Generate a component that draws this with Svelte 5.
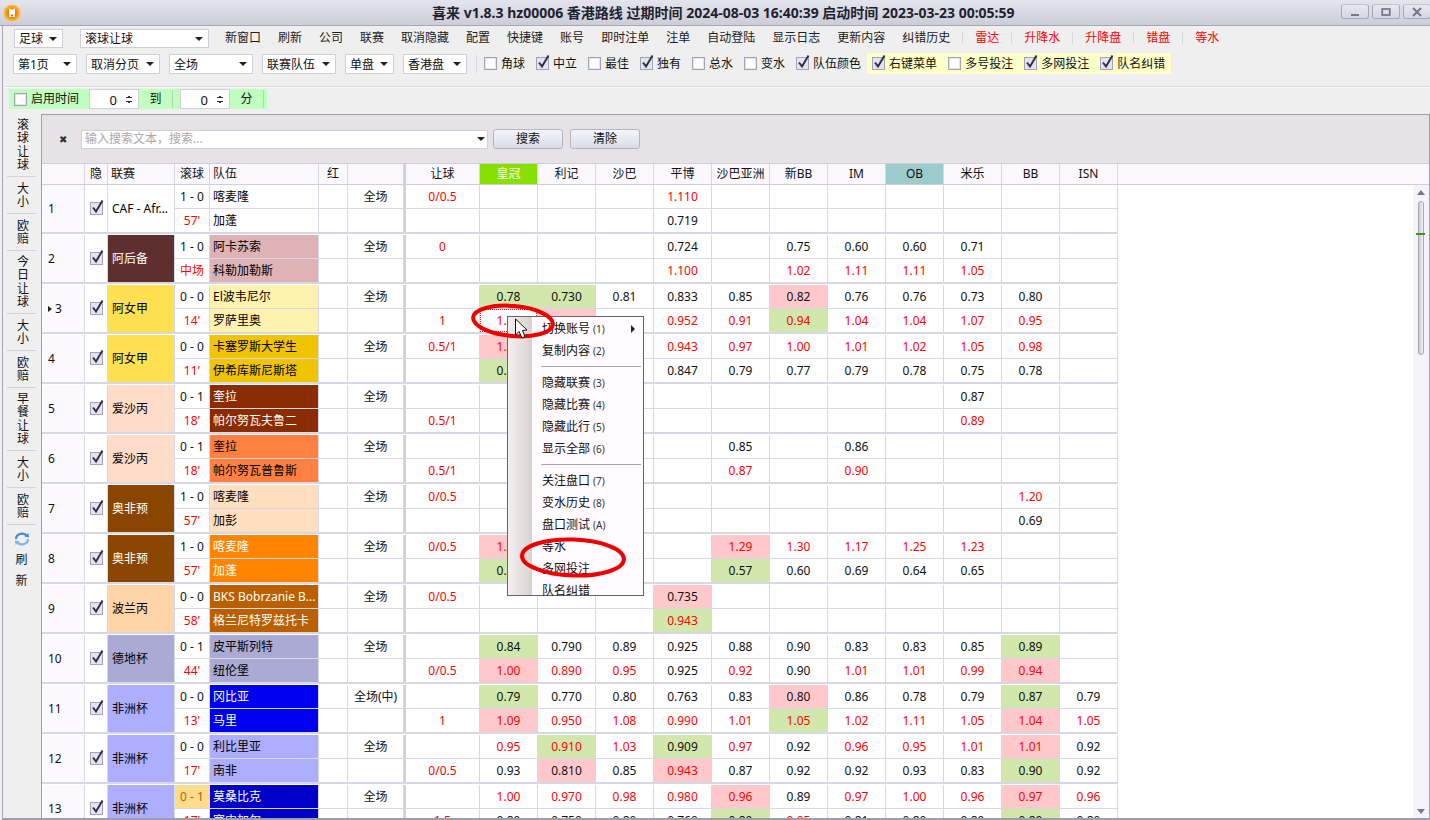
<script lang="ts">
	const links = ['新窗口', '刷新', '公司', '联赛', '取消隐藏', '配置', '快捷键', '账号', '即时注单', '注单', '自动登陆', '显示日志', '更新内容', '纠错历史'];
	const redLinks = ['雷达', '升降水', '升降盘', '错盘', '等水'];
	const selects = [
		{ text: '第1页', w: 64 },
		{ text: '取消分页', w: 74 },
		{ text: '全场', w: 84 },
		{ text: '联赛队伍', w: 74 },
		{ text: '单盘', w: 49 },
		{ text: '香港盘', w: 64 }
	];
	const checks = [
		{ text: '角球', on: false },
		{ text: '中立', on: true },
		{ text: '最佳', on: false },
		{ text: '独有', on: true },
		{ text: '总水', on: false },
		{ text: '变水', on: false },
		{ text: '队伍颜色', on: true }
	];
	const yellowChecks = [
		{ text: '右键菜单', on: true },
		{ text: '多号投注', on: false },
		{ text: '多网投注', on: true },
		{ text: '队名纠错', on: true }
	];
	const side = [
		{ text: '滚球让球', tall: true },
		{ text: '大小' },
		{ text: '欧赔' },
		{ text: '今日让球', tall: true },
		{ text: '大小' },
		{ text: '欧赔' },
		{ text: '早餐让球', tall: true },
		{ text: '大小' },
		{ text: '欧赔' }
	];
	const books = ['皇冠', '利记', '沙巴', '平博', '沙巴亚洲', '新BB', 'IM', 'OB', '米乐', 'BB', 'ISN'];
	const menu = [
		[{ t: '切换账号', k: '(1)', sub: true }, { t: '复制内容', k: '(2)' }],
		[{ t: '隐藏联赛', k: '(3)' }, { t: '隐藏比赛', k: '(4)' }, { t: '隐藏此行', k: '(5)' }, { t: '显示全部', k: '(6)' }],
		[{ t: '关注盘口', k: '(7)' }, { t: '变水历史', k: '(8)' }, { t: '盘口测试', k: '(A)' }, { t: '等水' }, { t: '多网投注' }, { t: '队名纠错' }]
	];

	// odds: * = red text, trailing g / p = green / pink cell
	const matches = [
		{ league: 'CAF - Afr...', lc: '#fff', lt: '#000', s: '1 - 0', m: "57'", a: '喀麦隆', b: '加蓬', tc: '#fff', tt: '#000', hc: '0/0.5', top: ',,,*1.110,,,,,,,', bot: ',,,0.719,,,,,,,' },
		{ league: '阿后备', lc: '#5f2f2f', lt: '#fff', s: '1 - 0', m: '中场', a: '阿卡苏索', b: '科勒加勒斯', tc: '#dfb3b6', tt: '#000', hc: '0', top: ',,,0.724,,0.75,0.60,0.60,0.71,,', bot: ',,,*1.100,,*1.02,*1.11,*1.11,*1.05,,' },
		{ league: '阿女甲', lc: '#ffe050', lt: '#000', s: '0 - 0', m: "14'", a: 'El波韦尼尔', b: '罗萨里奥', tc: '#fff2ae', tt: '#000', hl: '1', cur: true, top: '0.78g,0.730g,0.81,0.833,0.85,0.82p,0.76,0.76,0.73,0.80,', bot: '*1.05,p,,*0.952,*0.91,*0.94g,*1.04,*1.04,*1.07,*0.95,' },
		{ league: '阿女甲', lc: '#ffe050', lt: '#000', s: '0 - 0', m: "11'", a: '卡塞罗斯大学生', b: '伊希库斯尼斯塔', tc: '#f0c400', tt: '#000', hc: '0.5/1', top: '*1.05p,,,*0.943,*0.97,*1.00,*1.01,*1.02,*1.05,*0.98,', bot: '0.80g,,,0.847,0.79,0.77,0.79,0.78,0.75,0.78,' },
		{ league: '爱沙丙', lc: '#ffdcc8', lt: '#000', s: '0 - 1', m: "18'", a: '奎拉', b: '帕尔努瓦夫鲁二', tc: '#8a2c00', tt: '#fff', hl: '0.5/1', top: ',,,,,,,,0.87,,', bot: ',,,,,,,,*0.89,,' },
		{ league: '爱沙丙', lc: '#ffdcc8', lt: '#000', s: '0 - 1', m: "18'", a: '奎拉', b: '帕尔努瓦普鲁斯', tc: '#ff8040', tt: '#000', hl: '0.5/1', top: ',,,,0.85,,0.86,,,,', bot: ',,,,*0.87,,*0.90,,,,' },
		{ league: '奥非预', lc: '#8a4500', lt: '#fff', s: '1 - 0', m: "57'", a: '喀麦隆', b: '加彭', tc: '#ffdfbf', tt: '#000', hc: '0/0.5', top: ',,,,,,,,,*1.20,', bot: ',,,,,,,,,0.69,' },
		{ league: '奥非预', lc: '#8a4500', lt: '#fff', s: '1 - 0', m: "57'", a: '喀麦隆', b: '加蓬', tc: '#ff8400', tt: '#fff', hc: '0/0.5', top: '*1.05p,,,,*1.29p,*1.30,*1.17,*1.25,*1.23,,', bot: '0.80g,,,,0.57g,0.60,0.69,0.64,0.65,,' },
		{ league: '波兰丙', lc: '#ffd4a8', lt: '#000', s: '0 - 0', m: "58'", a: 'BKS Bobrzanie B...', b: '格兰尼特罗兹托卡', tc: '#bb6000', tt: '#fff', hc: '0/0.5', top: ',,,0.735p,,,,,,,', bot: ',,,*0.943g,,,,,,,' },
		{ league: '德地杯', lc: '#aaaad4', lt: '#000', s: '0 - 1', m: "44'", a: '皮平斯列特', b: '纽伦堡', tc: '#aaaad4', tt: '#000', hl: '0/0.5', top: '0.84g,0.790,0.89,0.925,0.88,0.90,0.83,0.83,0.85,0.89g,', bot: '*1.00p,*0.890,*0.95,0.925,*0.92,0.90,*1.01,*1.01,*0.99,*0.94p,' },
		{ league: '非洲杯', lc: '#aeaeff', lt: '#000', s: '0 - 0', m: "13'", a: '冈比亚', b: '马里', tc: '#0000f0', tt: '#fff', scope: '全场(中)', hl: '1', top: '0.79g,0.770,0.80,0.763,0.83,0.80p,0.86,0.78,0.79,0.87g,0.79', bot: '*1.09p,*0.950,*1.08,*0.990,*1.01,*1.05g,*1.02,*1.11,*1.05,*1.04p,*1.05' },
		{ league: '非洲杯', lc: '#aeaeff', lt: '#000', s: '0 - 0', m: "17'", a: '利比里亚', b: '南非', tc: '#aeaeff', tt: '#000', hl: '0/0.5', top: '*0.95,*0.910g,*1.03,0.909g,*0.97,0.92,*0.96,*0.95,*1.01,*1.01p,0.92', bot: '0.93,0.810p,0.85,*0.943p,0.87,0.92,0.92,0.93,0.83,0.90g,0.92' },
		{ league: '非洲杯', lc: '#aeaeff', lt: '#000', s: '0 - 1', warn: true, m: "17'", a: '莫桑比克', b: '塞内加尔', tc: '#0000c8', tt: '#fff', hl: '1.5', top: '*1.00,*0.970,*0.98,*0.980,*0.96p,0.89,*0.97,*1.00,*0.96,*0.97p,*0.96', bot: '0.80,0.750,0.80,0.760,0.80g,*0.95,0.81,0.80,0.80,0.80g,0.80' }
	];

	function parseOdds(line: string) {
		return line.split(',').map((v) => {
			const hit = v.match(/^(\*)?([\d.]*)([gp])?$/);
			return { red: !!hit?.[1], val: hit?.[2] ?? '', bg: hit?.[3] ?? '' };
		});
	}
</script>

{#snippet checkbox(on: boolean)}
	<span class="box" class:on>
		{#if on}
			<svg class="tick" width="15" height="16" viewBox="0 0 15 16"><path d="M3 8.5 L6 12.5 L12.5 1.5" fill="none" stroke="#30304a" stroke-width="2" /></svg>
		{/if}
	</span>
{/snippet}

<div class="window">
	<header class="titlebar">
		<svg class="logo" width="18" height="18" viewBox="0 0 18 18">
			<circle cx="9" cy="9" r="8" fill="#f9a51a" stroke="#f5c44e" stroke-width="1.2" />
			<circle cx="9" cy="9" r="5.4" fill="#f47f14" />
			<path d="M6 6 L6.6 3.8 L8 5.4 H10 L11.4 3.8 L12 6 V9 Q12 10 11.6 10.6 L12 13 H6 L6.4 10.6 Q6 10 6 9 Z" fill="#fff" />
			<circle cx="9" cy="11.4" r="1" fill="#e8302a" />
		</svg>
		<div class="title">喜来 v1.8.3 hz00006 香港路线 过期时间 2024-08-03 16:40:39 启动时间 2023-03-23 00:05:59</div>
		<div class="winbtns">
			<button class="winbtn"><svg width="10" height="10" viewBox="0 0 10 10"><rect x="1" y="7" width="8" height="2" fill="#777788" /></svg></button>
			<button class="winbtn"><svg width="10" height="10" viewBox="0 0 10 10"><rect x="1.2" y="2" width="7.6" height="6" fill="none" stroke="#777788" stroke-width="1.8" /></svg></button>
			<button class="winbtn"><svg width="10" height="10" viewBox="0 0 10 10"><path d="M1 1 L9 9 M9 1 L1 9" stroke="#777788" stroke-width="2" /></svg></button>
		</div>
	</header>

	<div class="frame">
		<div class="toolbar row1">
			<span class="select sport">足球</span>
			<span class="select mode">滚球让球</span>
			<div class="links">
				{#each links as l}<span>{l}</span>{/each}
			</div>
			<div class="red-links">
				{#each redLinks as l}<span>{l}</span>{/each}
			</div>
		</div>

		<div class="toolbar row2">
			{#each selects as s}
				<span class="select" style="width: {s.w}px">{s.text}</span>
			{/each}
			<i class="vsep"></i>
			<div class="checks">
				{#each checks as c}
					<label class="check">{@render checkbox(c.on)}{c.text}</label>
				{/each}
			</div>
			<div class="checks yellow">
				{#each yellowChecks as c}
					<label class="check">{@render checkbox(c.on)}{c.text}</label>
				{/each}
			</div>
		</div>

		<div class="divider"></div>

		<div class="toolbar row3">
			<div class="timer">
				<label class="check enable">{@render checkbox(false)}启用时间</label>
				<span class="spin">0<i class="arrows"></i></span>
				<span class="unit to">到</span>
				<span class="spin">0<i class="arrows"></i></span>
				<span class="unit minute-unit">分</span>
			</div>
		</div>

		<div class="workspace">
			<nav class="sidebar">
				{#each side as item}
					<div class="side-item" class:tall={item.tall}><span>{item.text}</span></div>
				{/each}
				<div class="refresh">
					<svg width="16" height="14" viewBox="0 0 16 14">
						<path d="M2 7 A6 5.4 0 0 1 13 4" fill="none" stroke="#3f8fd0" stroke-width="2.2" />
						<path d="M14 7 A6 5.4 0 0 1 3 10" fill="none" stroke="#7ab8e8" stroke-width="2.2" />
						<path d="M10.6 4.6 L15 5.4 L14.4 1 Z" fill="#3f8fd0" />
						<path d="M5.4 9.4 L1 8.6 L1.6 13 Z" fill="#7ab8e8" />
					</svg>
					<span>刷</span>
					<span>新</span>
				</div>
			</nav>

			<main class="panel">
				<div class="search">
					<span class="clear-x">✖</span>
					<div class="search-box">
						<span>输入搜索文本，搜索...</span>
						<i class="caret"></i>
					</div>
					<button class="btn">搜索</button>
					<button class="btn">清除</button>
				</div>

				<div class="table-head grid">
					<div></div>
					<div>隐</div>
					<div class="left">联赛</div>
					<div>滚球</div>
					<div class="left">队伍</div>
					<div>红</div>
					<div></div>
					<div class="hc-col">让球</div>
					{#each books as b}
						<div class:crown={b === '皇冠'} class:ob={b === 'OB'}>{b}</div>
					{/each}
					<div></div>
				</div>

				<div class="table-body">
					{#each matches as row, i}
						{@const top = parseOdds(row.top)}
						{@const bot = parseOdds(row.bot)}
						<div class="match grid">
							<div class="no span">
								{#if row.cur}<i class="pointer"></i>{/if}{i + 1}
							</div>
							<div class="hide span">{@render checkbox(true)}</div>
							<div class="league span" style="background: {row.lc}; color: {row.lt}">{row.league}</div>
							<div class="score" class:warn={row.warn}>{row.s}</div>
							<div class="team" style="background: {row.tc}; color: {row.tt}">{row.a}</div>
							<div></div>
							<div class="scope">{row.scope ?? '全场'}</div>
							<div class="hc-col red">{row.hc ?? ''}</div>
							{#each top as c}
								<div class="odd {c.bg}" class:red={c.red}>{c.val}</div>
							{/each}
							<div class="minute">{row.m}</div>
							<div class="team" style="background: {row.tc}; color: {row.tt}">{row.b}</div>
							<div></div>
							<div></div>
							<div class="hc-col red">{row.hl ?? ''}</div>
							{#each bot as c, j}
								<div class="odd {c.bg}" class:red={c.red} class:focus={row.cur && j === 0}>{c.val}</div>
							{/each}
						</div>
					{/each}
				</div>

				<div class="scrollbar">
					<i class="up"></i>
					<i class="thumb"></i>
					<i class="mark"></i>
					<i class="down"></i>
				</div>
			</main>
		</div>
	</div>

	<div class="context-menu">
		{#each menu as group, g}
			{#if g > 0}<div class="menu-sep"></div>{/if}
			{#each group as item}
				<div class="menu-item">
					<span>{item.t}</span>{#if item.k}<small>{item.k}</small>{/if}
					{#if item.sub}<i class="sub-arrow"></i>{/if}
				</div>
			{/each}
		{/each}
	</div>

	<!-- red marks and the mouse pointer lie over everything -->
	<svg class="marks" width="1430" height="820" viewBox="0 0 1430 820">
		<ellipse cx="513" cy="321" rx="40" ry="15" transform="rotate(5 513 321)" fill="none" stroke="#ee0000" stroke-width="4" />
		<ellipse cx="573" cy="557.5" rx="51" ry="18" transform="rotate(2 573 557.5)" fill="none" stroke="#ee0000" stroke-width="4" />
		<path d="M515.5 319 V335 L519 331.5 L522 338 L525 336.5 L522.5 330.5 L527 330 Z" fill="#fff" stroke="#111" stroke-width="1" />
	</svg>
</div>

<style>
	:global(body) {
		margin: 0;
		background: #efefef;
		overflow: hidden;
	}

	* {
		box-sizing: border-box;
	}

	.window {
		position: relative;
		width: 1430px;
		height: 820px;
		overflow: hidden;
		font: 12px/1 "Noto Sans", "Noto Sans CJK SC", sans-serif;
		color: #111;
		background: #efefef;
	}

	.titlebar {
		display: flex;
		align-items: center;
		height: 26px;
		padding-left: 3px;
		background: linear-gradient(#e4e4ee, #cdcdd9);
		border-bottom: 1px solid #a6a6b6;
	}

	.logo {
		flex: none;
	}

	.title {
		flex: 1;
		padding-left: 411px;
		font-size: 14px;
		font-weight: 700;
		color: #22222e;
		white-space: nowrap;
	}

	.winbtns {
		display: flex;
		gap: 3px;
		align-self: flex-start;
		margin-right: -1px;
		padding-top: 4px;
	}

	.winbtn {
		display: flex;
		align-items: center;
		justify-content: center;
		width: 28px;
		height: 15px;
		padding: 0;
		background: linear-gradient(#e8e8f0, #d6d6e2);
		border: 1px solid #a8a8b8;
		border-top-color: #c4c4d0;
		border-radius: 3px;
	}

	.frame {
		height: 794px;
		margin-left: 2px;
		border-left: 1px solid #a6a6b6;
		padding-left: 2px;
		border-bottom: 2px solid #9d9dab;
	}

	.toolbar {
		display: flex;
		align-items: center;
	}

	.row1 {
		height: 20px;
		padding-top: 2px;
		box-sizing: content-box;
		padding-left: 9px;
	}

	.select {
		position: relative;
		display: block;
		flex: none;
		height: 19px;
		padding: 3px 0 0 4px;
		background: #fff;
		border: 1px solid #cfcfdc;
		font-size: 12px;
		white-space: nowrap;
	}

	.select::after {
		content: '';
		position: absolute;
		right: 5px;
		top: 7px;
		border: 4px solid transparent;
		border-top: 4px solid #222;
		border-bottom: 0;
	}

	.sport {
		width: 49px;
		margin-right: 17px;
	}

	.mode {
		width: 129px;
		margin-right: 16px;
	}

	.links {
		display: flex;
		gap: 17px;
		color: #1c1c1c;
	}

	.red-links {
		display: flex;
		color: #f00;
	}

	.red-links span {
		padding: 0 12px;
		border-left: 1px solid #d8d8e2;
	}

	.red-links span:first-child {
		margin-left: 12px;
	}

	.row2 {
		height: 21px;
		margin-top: 5px;
		padding-left: 8px;
		gap: 9px;
	}

	.row2 .select {
		height: 20px;
		padding-top: 4px;
	}

	.vsep {
		width: 1px;
		height: 18px;
		background: #d8d8e2;
	}

	.checks {
		display: flex;
		align-items: center;
		gap: 11px;
		height: 21px;
	}

	.row2 .checks:not(.yellow) {
		margin-left: -2px;
	}

	.yellow {
		margin-left: -3px;
		padding: 0 6px 0 5px;
		background: #ffffc8;
	}

	.check {
		display: flex;
		align-items: center;
		gap: 4px;
		white-space: nowrap;
	}

	.box {
		position: relative;
		display: block;
		flex: none;
		width: 13px;
		height: 13px;
		background: #fff;
		border: 1px solid #a2a2b8;
		box-shadow: inset 0 0 0 1px #e4e4ee;
	}

	.box.on {
		background: #e4e4f0;
	}

	.tick {
		position: absolute;
		left: -1px;
		top: -4px;
	}

	.divider {
		height: 2px;
		margin-top: 12px;
		background: #dcdce2;
		border-bottom: 1px solid #f8f8fa;
	}

	.row3 {
		height: 20px;
		margin-top: 1px;
		padding-left: 4px;
	}

	.timer {
		display: flex;
		align-items: center;
		height: 20px;
		background: #c0ffc0;
	}

	.enable {
		width: 80px;
		padding-left: 5px;
	}

	.spin {
		position: relative;
		display: block;
		width: 50px;
		height: 20px;
		padding: 4px 21px 0 0;
		text-align: right;
		font-size: 13px;
		background: #fff;
		border: 1px solid #d0d0da;
	}

	.arrows {
		position: absolute;
		right: 5px;
		top: 3px;
		width: 8px;
		height: 12px;
		background:
			linear-gradient(#333, #333) 3px 3px / 2px 1px no-repeat,
			linear-gradient(#333, #333) 1px 4px / 6px 1px no-repeat,
			linear-gradient(#333, #333) 1px 8px / 6px 1px no-repeat,
			linear-gradient(#333, #333) 3px 9px / 2px 1px no-repeat;
	}

	.unit {
		display: block;
		height: 18px;
		border-right: 1px solid #b0d8b0;
		line-height: 18px;
		text-align: center;
	}

	.to {
		width: 34px;
		margin-right: 7px;
	}

	.minute-unit {
		width: 34px;
		margin-right: 3px;
	}

	.workspace {
		display: flex;
		margin-top: 5px;
		height: 704px;
	}

	.sidebar {
		flex: none;
		width: 36px;
		padding: 0 5px 0 2px;
	}

	.side-item {
		display: flex;
		align-items: center;
		justify-content: center;
		height: 37px;
		border-bottom: 1px solid #d2d2da;
	}

	.side-item.tall {
		height: 63px;
	}

	.side-item span {
		writing-mode: vertical-rl;
		text-orientation: upright;
		letter-spacing: 1.5px;
		line-height: 1;
	}

	.refresh {
		display: flex;
		flex-direction: column;
		align-items: center;
		padding-top: 7px;
	}

	.refresh span {
		margin-top: 6px;
		line-height: 15px;
	}

	.panel {
		position: relative;
		flex: 1;
		min-width: 0;
		overflow: hidden;
		background: #fff;
		border: 1px solid #9d9dab;
		border-width: 1px 1px 0;
	}

	.search {
		display: flex;
		align-items: center;
		height: 49px;
		padding-left: 17px;
		background: #e6e2e6;
		border-bottom: 1px solid #cfcfda;
	}

	.clear-x {
		width: 22px;
		font-size: 10px;
		color: #333;
	}

	.search-box {
		position: relative;
		display: flex;
		align-items: center;
		width: 407px;
		height: 19px;
		padding-left: 3px;
		color: #a8a8a8;
		background: #fff;
		border: 1px solid #d0d0da;
	}

	.caret {
		position: absolute;
		right: 2px;
		top: 6px;
		border: 4px solid transparent;
		border-top: 4px solid #222;
		border-bottom: 0;
	}

	.btn {
		width: 70px;
		height: 20px;
		margin-left: 5px;
		padding: 0;
		font: inherit;
		color: #111;
		background: linear-gradient(#f4f4fa, #dcdce8);
		border: 1px solid #b4b4c2;
		border-radius: 3px;
	}

	.btn + .btn {
		margin-left: 7px;
	}

	.grid {
		display: grid;
		grid-template-columns: 42px 22px 66px 34px 108px 28px 55px 75px repeat(11, 57px);
		column-gap: 1px;
		width: 1076px;
		background: #d8d8e4;
	}

	.table-head {
		grid-template-columns: 42px 22px 66px 34px 108px 28px 55px 75px repeat(11, 57px) 1fr;
		height: 21px;
		width: 100%;
		border-bottom: 1px solid #cfcfda;
	}

	.table-head > div {
		display: flex;
		align-items: center;
		justify-content: center;
		background: #faf8fc;
	}

	.table-head > div.left {
		justify-content: flex-start;
		padding-left: 3px;
	}

	.table-head .crown {
		color: #fff;
		background: #88e000;
	}

	.table-head .ob {
		background: #9ccbcc;
	}

	.hc-col {
		border-left: 2px solid #d0d0dc;
	}

	.table-body {
		height: 640px;
		overflow: hidden;
	}

	.match {
		grid-template-rows: 23px 23px;
		row-gap: 1px;
		margin-bottom: 3px;
		box-shadow: 0 1px 0 #d8d8e4, 0 2px 0 #d8d8e4;
	}

	.match > div {
		display: flex;
		align-items: center;
		justify-content: center;
		background: #fff;
		white-space: nowrap;
		overflow: hidden;
	}

	.match > .span {
		grid-row: span 2;
	}

	.match > .no {
		justify-content: flex-start;
		padding-left: 6px;
		background: #fbf9fd;
	}

	.pointer {
		margin-right: 3px;
		border: 3.5px solid transparent;
		border-left: 4px solid #222;
		border-right: 0;
	}

	.match > .league {
		justify-content: flex-start;
		padding-left: 4px;
	}

	.score {
		color: #111;
	}

	.match > .warn {
		color: #c06000;
		background: #ffdc8c;
	}

	.minute,
	.red {
		color: #f00;
	}

	.match > .team {
		justify-content: flex-start;
		padding-left: 3px;
	}

	.match > .g {
		background: #d2e7ab;
	}

	.match > .p {
		background: #ffc9cc;
	}

	.match > .focus {
		outline: 1px dotted #e02020;
		outline-offset: -1px;
	}

	.scrollbar {
		position: absolute;
		right: 0;
		top: 70px;
		bottom: 0;
		width: 16px;
		background: #f6f4fa;
	}

	.scrollbar i {
		position: absolute;
		display: block;
	}

	.up,
	.down {
		left: 4px;
		border: 4px solid transparent;
	}

	.up {
		top: 5px;
		border-bottom: 5px solid #77778a;
		border-top: 0;
	}

	.down {
		bottom: 4px;
		border-top: 5px solid #77778a;
		border-bottom: 0;
	}

	.thumb {
		left: 5px;
		top: 16px;
		width: 6px;
		height: 154px;
		background: linear-gradient(90deg, #c8c8d4, #f4f4f8);
		border: 1px solid #a8a8b6;
		border-radius: 3px;
	}

	.mark {
		left: 3px;
		top: 48px;
		width: 9px;
		height: 2px;
		background: #3f9420;
	}

	.context-menu {
		position: absolute;
		left: 507px;
		top: 316px;
		width: 137px;
		height: 280px;
		padding: 1px 0 0 34px;
		background: linear-gradient(90deg, #f4f0f0 0, #d8d2cf 24px, #fffbff 24px) 0 0 no-repeat;
		border: 1px solid #66666e;
	}

	.menu-item {
		position: relative;
		display: flex;
		align-items: center;
		height: 22px;
		color: #111;
	}

	.menu-item small {
		margin-left: 3px;
		font-size: 10px;
		color: #333;
	}

	.sub-arrow {
		position: absolute;
		right: 8px;
		top: 7px;
		border: 4px solid transparent;
		border-left: 4px solid #222;
		border-right: 0;
	}

	.menu-sep {
		height: 1px;
		margin: 4px 2px 5px -1px;
		background: #a8a8a8;
	}

	.marks {
		position: absolute;
		left: 0;
		top: 0;
		pointer-events: none;
	}
</style>
